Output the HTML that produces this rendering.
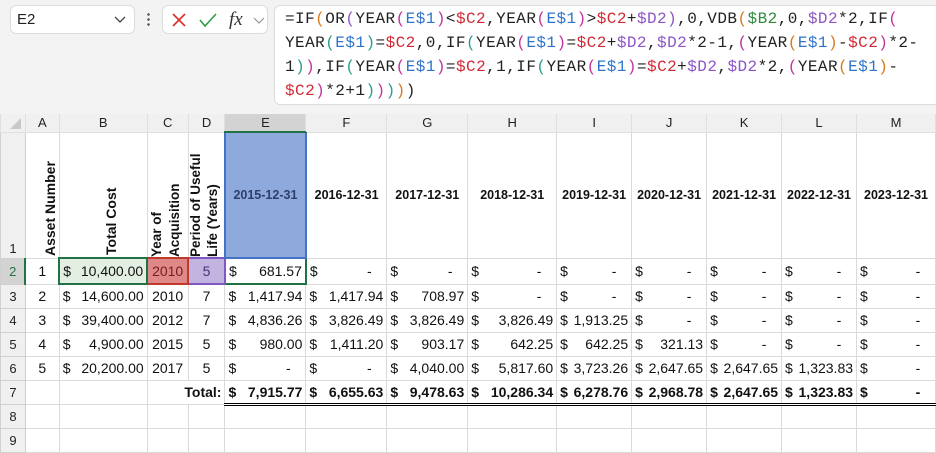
<!DOCTYPE html>
<html><head><meta charset="utf-8"><style>
*{box-sizing:border-box;margin:0;padding:0}
body{width:936px;height:434px;overflow:hidden;background:#f3f3f3;font-family:"Liberation Sans",sans-serif;position:relative}
.nb{position:absolute;left:10px;top:5px;width:125px;height:29px;background:#fff;border:1px solid #dcdcdc;border-radius:6px;font-size:15px;padding:5px 0 0 6px;color:#222}
.fb{position:absolute;left:162px;top:5px;width:106px;height:29px;background:#fff;border:1px solid #dcdcdc;border-radius:6px}
.fx{position:absolute;left:274px;top:5px;width:670px;height:100px;background:#fff;border:1px solid #dcdcdc;border-radius:6px}
.ft{position:absolute;left:285px;top:7px;font-family:"Liberation Mono",monospace;font-size:16px;line-height:24px;letter-spacing:0.45px;color:#222;white-space:pre}
.b{color:#2f74c9}.r{color:#d22a35}.p{color:#8d55c6}.g{color:#2f8a3e}.o{color:#d97b1a}.m{color:#c4329a}.t{color:#2a9d8f}
table{position:absolute;left:0;top:114px;border-collapse:collapse;table-layout:fixed;background:#fff}
td{border:1px solid #dadada;font-size:14px;color:#111;padding:0 3px;overflow:hidden;white-space:nowrap;position:relative}
tr.h td{background:#f0f0f0;height:18px;text-align:center;font-size:13px;color:#222;border-color:#e0e0e0;border-top:none}
td.rh{background:#f0f0f0;text-align:center;font-size:13px;color:#222;border-color:#d0d0d0;padding:0}
.acc{display:flex;justify-content:space-between}
.c{text-align:center}
.rot{position:absolute;left:50%;bottom:2px;transform-origin:0 100%;transform:rotate(-90deg) translateY(100%);font-weight:bold;font-size:14px;line-height:17px;white-space:nowrap}
.dt{font-weight:bold;font-size:12.5px;text-align:center;vertical-align:middle}
.bold{font-weight:bold}
</style></head><body>
<div class="nb">E2<svg style="position:absolute;right:8px;top:10px" width="12" height="8"><path d="M1 1l5 5 5-5" stroke="#444" fill="none" stroke-width="1.3"/></svg></div>
<div style="position:absolute;left:147px;top:12px;width:3px;height:15px;background:radial-gradient(circle,#555 1.2px,transparent 1.4px) 0 0/3px 5px"></div>
<div class="fb">
<svg style="position:absolute;left:8px;top:6px" width="16" height="16"><path d="M2 2l12 12M14 2L2 14" stroke="#d9302f" stroke-width="1.6"/></svg>
<svg style="position:absolute;left:35px;top:6px" width="20" height="16"><path d="M2 8l5 6L18 2" stroke="#2e9c46" stroke-width="1.6" fill="none"/></svg>
<span style="position:absolute;left:66px;top:3px;font-family:'Liberation Serif',serif;font-style:italic;font-size:19px;color:#333">fx</span>
<svg style="position:absolute;left:90px;top:11px" width="12" height="8"><path d="M1 1l5 5 5-5" stroke="#999" fill="none" stroke-width="1.2"/></svg>
</div>
<div class="fx"></div>
<div class="ft">=IF<span class="o">(</span>OR<span class="p">(</span>YEAR<span class="m">(</span><span class="b">E$1</span><span class="m">)</span>&lt;<span class="r">$C2</span>,YEAR<span class="m">(</span><span class="b">E$1</span><span class="m">)</span>&gt;<span class="r">$C2</span>+<span class="p">$D2</span><span class="p">)</span>,0,VDB<span class="o">(</span><span class="g">$B2</span>,0,<span class="p">$D2</span>*2,IF<span class="m">(</span>
YEAR<span class="t">(</span><span class="b">E$1</span><span class="t">)</span>=<span class="r">$C2</span>,0,IF<span class="t">(</span>YEAR<span class="m">(</span><span class="b">E$1</span><span class="m">)</span>=<span class="r">$C2</span>+<span class="p">$D2</span>,<span class="p">$D2</span>*2-1,<span class="m">(</span>YEAR<span class="o">(</span><span class="b">E$1</span><span class="o">)</span>-<span class="r">$C2</span><span class="m">)</span>*2-
1<span class="t">)</span><span class="m">)</span>,IF<span class="t">(</span>YEAR<span class="m">(</span><span class="b">E$1</span><span class="m">)</span>=<span class="r">$C2</span>,1,IF<span class="t">(</span>YEAR<span class="m">(</span><span class="b">E$1</span><span class="m">)</span>=<span class="r">$C2</span>+<span class="p">$D2</span>,<span class="p">$D2</span>*2,<span class="m">(</span>YEAR<span class="o">(</span><span class="b">E$1</span><span class="o">)</span>-
<span class="r">$C2</span><span class="m">)</span>*2+1<span class="t">)</span><span class="m">)</span><span class="t">)</span><span class="o">)</span>)</div>

<table>
<colgroup><col style="width:25px"><col style="width:34px"><col style="width:88px"><col style="width:41px"><col style="width:37px"><col style="width:81px"><col style="width:81px"><col style="width:81px"><col style="width:89px"><col style="width:75px"><col style="width:75px"><col style="width:75px"><col style="width:75px"><col style="width:79px"></colgroup>
<tr class="h"><td style="position:relative"><svg style="position:absolute;left:8px;top:3px" width="13" height="13"><path d="M12 1V12H1Z" fill="#c8c8c8"/></svg></td><td>A</td><td>B</td><td>C</td><td>D</td><td style="background:#d3d3d3;border-bottom:2px solid #217346">E</td><td>F</td><td>G</td><td>H</td><td>I</td><td>J</td><td>K</td><td>L</td><td>M</td></tr>
<tr style="height:126px"><td class="rh" style="vertical-align:bottom;padding-bottom:2px">1</td>
<td><div class="rot">Asset Number</div></td>
<td><div class="rot">Total Cost</div></td>
<td><div class="rot" style="left:0;bottom:0;font-size:13.5px;line-height:18px">Year of<br>Acquisition</div></td>
<td><div class="rot" style="left:-2px;bottom:0;font-size:13.5px;line-height:17px">Period of Useful<br>Life (Years)</div></td>
<td class="dt" style="background:#8eaadc;border:2px solid #4472c4;color:#2d3f6a">2015-12-31</td>
<td class="dt">2016-12-31</td><td class="dt">2017-12-31</td><td class="dt">2018-12-31</td><td class="dt">2019-12-31</td><td class="dt">2020-12-31</td><td class="dt">2021-12-31</td><td class="dt">2022-12-31</td><td class="dt">2023-12-31</td></tr>
<tr style="height:26px;border-top:1.5px solid #000"><td class="rh" style="background:#d3d3d3;border-right:2px solid #217346;color:#217346">2</td><td class="c">1</td>
<td style="background:#e3efe3;border:2px solid #217346"><div class="acc"><span>$</span><span>10,400.00</span></div></td>
<td class="c" style="background:#de8888;border:2px solid #c0392b;color:#7a1c1c">2010</td>
<td class="c" style="background:#c3b3e0;border:2px solid #7e57c2;color:#4a2f7a">5</td>
<td style="border:2px solid #217346"><div class="acc"><span>$</span><span>681.57</span></div></td>
<td><div class="acc"><span>$</span><span>-&nbsp;&nbsp;&nbsp;</span></div></td><td><div class="acc"><span>$</span><span>-&nbsp;&nbsp;&nbsp;</span></div></td><td><div class="acc"><span>$</span><span>-&nbsp;&nbsp;&nbsp;</span></div></td><td><div class="acc"><span>$</span><span>-&nbsp;&nbsp;&nbsp;</span></div></td><td><div class="acc"><span>$</span><span>-&nbsp;&nbsp;&nbsp;</span></div></td><td><div class="acc"><span>$</span><span>-&nbsp;&nbsp;&nbsp;</span></div></td><td><div class="acc"><span>$</span><span>-&nbsp;&nbsp;&nbsp;</span></div></td><td><div class="acc"><span>$</span><span>-&nbsp;&nbsp;&nbsp;</span></div></td></tr>
<tr style="height:24px"><td class="rh">3</td><td class="c">2</td><td><div class="acc"><span>$</span><span>14,600.00</span></div></td><td class="c">2010</td><td class="c">7</td><td><div class="acc"><span>$</span><span>1,417.94</span></div></td><td><div class="acc"><span>$</span><span>1,417.94</span></div></td><td><div class="acc"><span>$</span><span>708.97</span></div></td><td><div class="acc"><span>$</span><span>-&nbsp;&nbsp;&nbsp;</span></div></td><td><div class="acc"><span>$</span><span>-&nbsp;&nbsp;&nbsp;</span></div></td><td><div class="acc"><span>$</span><span>-&nbsp;&nbsp;&nbsp;</span></div></td><td><div class="acc"><span>$</span><span>-&nbsp;&nbsp;&nbsp;</span></div></td><td><div class="acc"><span>$</span><span>-&nbsp;&nbsp;&nbsp;</span></div></td><td><div class="acc"><span>$</span><span>-&nbsp;&nbsp;&nbsp;</span></div></td></tr>
<tr style="height:24px"><td class="rh">4</td><td class="c">3</td><td><div class="acc"><span>$</span><span>39,400.00</span></div></td><td class="c">2012</td><td class="c">7</td><td><div class="acc"><span>$</span><span>4,836.26</span></div></td><td><div class="acc"><span>$</span><span>3,826.49</span></div></td><td><div class="acc"><span>$</span><span>3,826.49</span></div></td><td><div class="acc"><span>$</span><span>3,826.49</span></div></td><td><div class="acc"><span>$</span><span>1,913.25</span></div></td><td><div class="acc"><span>$</span><span>-&nbsp;&nbsp;&nbsp;</span></div></td><td><div class="acc"><span>$</span><span>-&nbsp;&nbsp;&nbsp;</span></div></td><td><div class="acc"><span>$</span><span>-&nbsp;&nbsp;&nbsp;</span></div></td><td><div class="acc"><span>$</span><span>-&nbsp;&nbsp;&nbsp;</span></div></td></tr>
<tr style="height:24px"><td class="rh">5</td><td class="c">4</td><td><div class="acc"><span>$</span><span>4,900.00</span></div></td><td class="c">2015</td><td class="c">5</td><td><div class="acc"><span>$</span><span>980.00</span></div></td><td><div class="acc"><span>$</span><span>1,411.20</span></div></td><td><div class="acc"><span>$</span><span>903.17</span></div></td><td><div class="acc"><span>$</span><span>642.25</span></div></td><td><div class="acc"><span>$</span><span>642.25</span></div></td><td><div class="acc"><span>$</span><span>321.13</span></div></td><td><div class="acc"><span>$</span><span>-&nbsp;&nbsp;&nbsp;</span></div></td><td><div class="acc"><span>$</span><span>-&nbsp;&nbsp;&nbsp;</span></div></td><td><div class="acc"><span>$</span><span>-&nbsp;&nbsp;&nbsp;</span></div></td></tr>
<tr style="height:24px"><td class="rh">6</td><td class="c">5</td><td><div class="acc"><span>$</span><span>20,200.00</span></div></td><td class="c">2017</td><td class="c">5</td><td><div class="acc"><span>$</span><span>-&nbsp;&nbsp;&nbsp;</span></div></td><td><div class="acc"><span>$</span><span>-&nbsp;&nbsp;&nbsp;</span></div></td><td><div class="acc"><span>$</span><span>4,040.00</span></div></td><td><div class="acc"><span>$</span><span>5,817.60</span></div></td><td><div class="acc"><span>$</span><span>3,723.26</span></div></td><td><div class="acc"><span>$</span><span>2,647.65</span></div></td><td><div class="acc"><span>$</span><span>2,647.65</span></div></td><td><div class="acc"><span>$</span><span>1,323.83</span></div></td><td><div class="acc"><span>$</span><span>-&nbsp;&nbsp;&nbsp;</span></div></td></tr>
<tr style="height:24px" class="bold"><td class="rh" style="font-weight:normal">7</td><td></td><td></td><td colspan="2" style="text-align:right;font-weight:bold">Total:</td>
<td style="border-top:1.5px solid #000;border-bottom:3px double #000"><div class="acc"><span>$</span><span>7,915.77</span></div></td>
<td style="border-top:1.5px solid #000;border-bottom:3px double #000"><div class="acc"><span>$</span><span>6,655.63</span></div></td>
<td style="border-top:1.5px solid #000;border-bottom:3px double #000"><div class="acc"><span>$</span><span>9,478.63</span></div></td>
<td style="border-top:1.5px solid #000;border-bottom:3px double #000"><div class="acc"><span>$</span><span>10,286.34</span></div></td>
<td style="border-top:1.5px solid #000;border-bottom:3px double #000"><div class="acc"><span>$</span><span>6,278.76</span></div></td>
<td style="border-top:1.5px solid #000;border-bottom:3px double #000"><div class="acc"><span>$</span><span>2,968.78</span></div></td>
<td style="border-top:1.5px solid #000;border-bottom:3px double #000"><div class="acc"><span>$</span><span>2,647.65</span></div></td>
<td style="border-top:1.5px solid #000;border-bottom:3px double #000"><div class="acc"><span>$</span><span>1,323.83</span></div></td>
<td style="border-top:1.5px solid #000;border-bottom:3px double #000"><div class="acc"><span>$</span><span>-&nbsp;&nbsp;&nbsp;</span></div></td></tr>
<tr style="height:24px"><td class="rh">8</td><td></td><td></td><td></td><td></td><td></td><td></td><td></td><td></td><td></td><td></td><td></td><td></td><td></td></tr>
<tr style="height:24px"><td class="rh">9</td><td></td><td></td><td></td><td></td><td></td><td></td><td></td><td></td><td></td><td></td><td></td><td></td><td></td></tr>
</table>
</body></html>
